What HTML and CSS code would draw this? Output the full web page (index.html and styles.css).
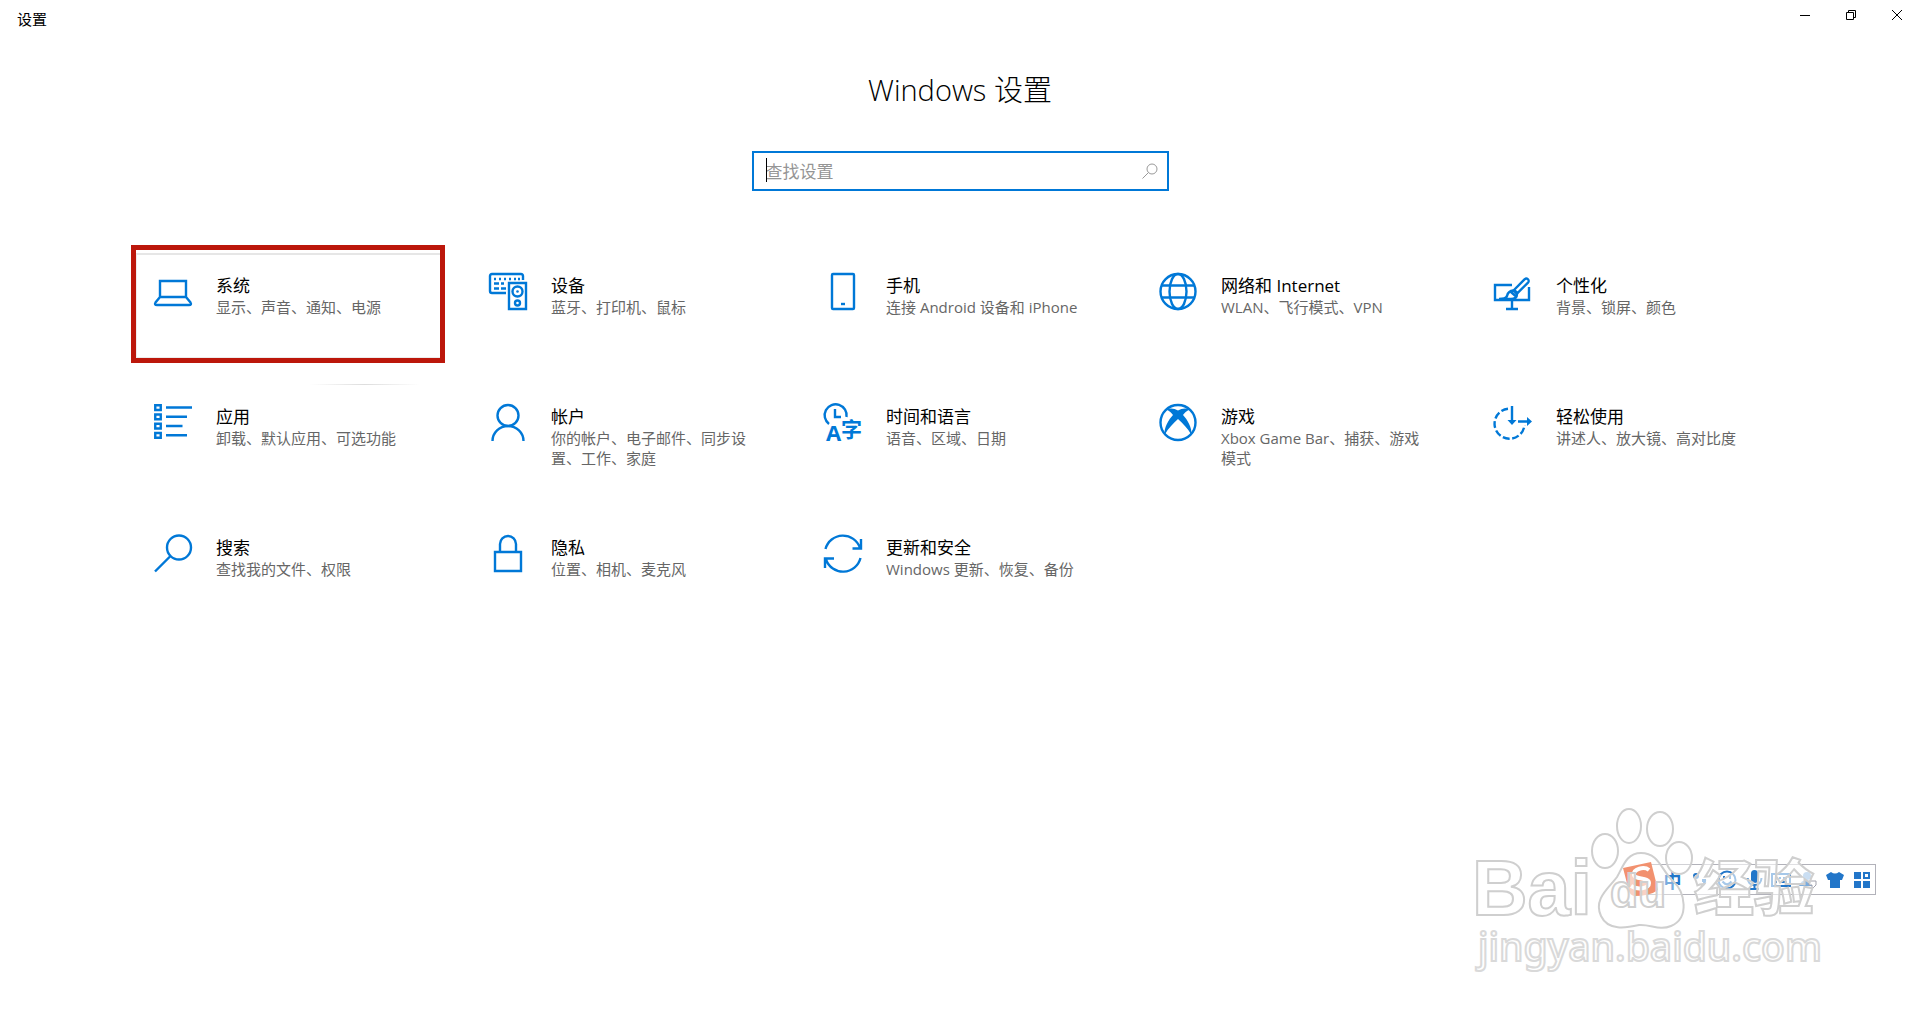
FILE: index.html
```html
<!DOCTYPE html>
<html lang="zh-CN">
<head>
<meta charset="utf-8">
<title>设置</title>
<link rel="stylesheet" href="styles.css">
</head>
<body>
<header class="titlebar">
  <span class="titlebar-name">设置</span>
  <div class="window-buttons">
    <button type="button" aria-label="最小化"><svg width="12" height="12" viewBox="0 0 12 12"><path d="M1 6.500H11"/></svg></button>
    <button type="button" aria-label="还原"><svg width="12" height="12" viewBox="0 0 12 12"><path d="M1.500 3.500H8.500V10.500H1.500ZM3.500 3.500V1.500H10.500V8.500H8.500"/></svg></button>
    <button type="button" aria-label="关闭"><svg width="12" height="12" viewBox="0 0 12 12"><path d="M1 1L11 11M11 1L1 11"/></svg></button>
  </div>
</header>

<main>
  <h1>Windows 设置</h1>
  <form class="search">
    <input type="text" placeholder="查找设置" aria-label="查找设置">
    <span class="caret"></span>
    <button type="button" aria-label="搜索"><svg width="16" height="16" viewBox="0 0 16 16"><circle cx="10" cy="6" r="5"/><path d="M6.500 9.500L.5 15.500"/></svg></button>
  </form>

  <nav class="tiles">
    <a href="#system" class="tile selected">
      <svg class="icon" viewBox="0 0 38 38"><path d="M6 8H32V24H6ZM6 24L1.500 29.500Q0 32 3 32H35Q38 32 36.500 29.500L32 24"/></svg>
      <span class="label"><strong>系统</strong><small>显示、声音、通知、电源</small></span>
    </a>
    <a href="#devices" class="tile">
      <svg class="icon" viewBox="0 0 38 38"><path d="M34 7V3Q34 1 32 1H3Q1 1 1 3V18Q1 20 3 20H17M20 10H37V36H20Z"/><circle cx="28.500" cy="18.500" r="5"/><circle cx="28.500" cy="30" r="2.500"/><circle class="solid" cx="28.500" cy="18.500" r="1.300"/><path d="M5 6H7M10 6H12M15 6H17M20 6H22M25 6H27M29 6H31M5 10.500H10M12 10.500H15M5 15.500H10M12 15.500H17"/></svg>
      <span class="label"><strong>设备</strong><small>蓝牙、打印机、鼠标</small></span>
    </a>
    <a href="#phone" class="tile">
      <svg class="icon" viewBox="0 0 38 38"><rect x="8" y="1" width="22" height="35" rx="1"/><path d="M17 31H21"/></svg>
      <span class="label"><strong>手机</strong><small>连接 Android 设备和 iPhone</small></span>
    </a>
    <a href="#network" class="tile">
      <svg class="icon" viewBox="0 0 38 38"><circle cx="19" cy="18.500" r="17.500"/><ellipse cx="19" cy="18.500" rx="8.500" ry="17.500"/><path d="M2 12.500H36M2 24.500H36"/></svg>
      <span class="label"><strong>网络和 Internet</strong><small>WLAN、飞行模式、VPN</small></span>
    </a>
    <a href="#personalization" class="tile">
      <svg class="icon" viewBox="0 0 38 38"><path d="M18 12H1V27H35V14M18 27V35M12 36H24"/><path d="M20 17L30.500 6.300A2.400 2.400 0 0 1 34 9.700L23.500 20Z"/><path d="M19.500 17.500L23 21Q23 26 17 26H5Q12 26 13 23Q14 18 19.500 17.500M17 19L21.500 23"/></svg>
      <span class="label"><strong>个性化</strong><small>背景、锁屏、颜色</small></span>
    </a>
    <a href="#apps" class="tile">
      <svg class="icon" viewBox="0 0 38 38"><path d="M1.250 1.250H6.750V6H1.250ZM1.250 10.500H6.750V15.250H1.250ZM1.250 19.750H6.750V24.500H1.250ZM1.250 29H6.750V33.750H1.250Z"/><path d="M12 3.500H38M12 12.750H33M12 22H28.500M12 31.250H33"/></svg>
      <span class="label"><strong>应用</strong><small>卸载、默认应用、可选功能</small></span>
    </a>
    <a href="#accounts" class="tile">
      <svg class="icon" viewBox="0 0 38 38"><circle cx="19" cy="11.500" r="10.500"/><path d="M3.500 37A15.500 15 0 0 1 34.500 37"/></svg>
      <span class="label"><strong>帐户</strong><small>你的帐户、电子邮件、同步设置、工作、家庭</small></span>
    </a>
    <a href="#time" class="tile">
      <svg class="icon" viewBox="0 0 38 38"><path d="M5 20A11 11 0 1 1 22.500 13M11 5V13H17"/><text x="2" y="37" class="letter">A</text><text x="17" y="33" class="hanzi">字</text></svg>
      <span class="label"><strong>时间和语言</strong><small>语音、区域、日期</small></span>
    </a>
    <a href="#gaming" class="tile">
      <svg class="icon" viewBox="0 0 38 38"><circle cx="19" cy="18.500" r="17.500"/><path class="solid" d="M7.500 5.500C11.500 3.500 15.500 4.500 19 6.500C22.500 4.500 26.500 3.500 30.500 5.500C27.500 7 25.500 9 24 11C28.500 16 33 23 32.500 31C28.500 24 23.500 19 19 15C14.500 19 9.500 24 5.500 31C5 23 9.500 16 14 11C12.500 9 10.500 7 7.500 5.500Z"/></svg>
      <span class="label"><strong>游戏</strong><small>Xbox Game Bar、捕获、游戏模式</small></span>
    </a>
    <a href="#ease" class="tile">
      <svg class="icon" viewBox="0 0 38 38"><path d="M14 4.800A15 15 0 1 0 30.500 21" stroke-dasharray="7 2.600"/><path d="M18 2V17M24 17.500H34"/><path class="solid" d="M13.500 16H22.500L18 21ZM33 13V22L38 17.500Z"/></svg>
      <span class="label"><strong>轻松使用</strong><small>讲述人、放大镜、高对比度</small></span>
    </a>
    <a href="#search" class="tile">
      <svg class="icon" viewBox="0 0 38 38"><circle cx="25" cy="12.500" r="12"/><path d="M16.500 21L1 36.500"/></svg>
      <span class="label"><strong>搜索</strong><small>查找我的文件、权限</small></span>
    </a>
    <a href="#privacy" class="tile">
      <svg class="icon" viewBox="0 0 38 38"><path d="M6 17H32V36H6ZM11 17V9A8 8 0 0 1 27 9V17"/></svg>
      <span class="label"><strong>隐私</strong><small>位置、相机、麦克风</small></span>
    </a>
    <a href="#update" class="tile">
      <svg class="icon" viewBox="0 0 38 38"><path d="M1.500 14A18 18 0 0 1 36 13M37 4V13.500H28.500M36.500 23A18 18 0 0 1 2 24.500M1 33V23.500H10"/></svg>
      <span class="label"><strong>更新和安全</strong><small>Windows 更新、恢复、备份</small></span>
    </a>
  </nav>
</main>

<div class="ime">
  <svg class="ime-logo" width="38" height="38" viewBox="0 0 38 38"><path d="M1 7L29 1L36 29Q28 35 12 35Q8 34 7 30Z" fill="#e9490f"/><path d="M27 9C22 5 11 8 12 14C13 19 27 16 27 22C27 28 15 29 9 25" fill="none" stroke="#fff" stroke-width="4"/></svg>
  <button type="button" class="ime-lang">中</button>
  <button type="button" aria-label="标点"><svg width="20" height="20" viewBox="0 0 20 20"><circle cx="6" cy="6" r="2" fill="none" stroke="#2276c9" stroke-width="2"/><path d="M12 9H16Q17 14 12 17V15Q14 14 13 12H12Z"/></svg></button>
  <button type="button" aria-label="表情"><svg width="20" height="20" viewBox="0 0 20 20"><circle cx="10" cy="10" r="8.500" fill="none" stroke="#2276c9" stroke-width="2"/><path d="M6 6H8V9H6ZM12 6H14V9H12Z"/><path d="M5.500 11.500Q10 17 14.500 11.500" fill="none" stroke="#2276c9" stroke-width="2"/></svg></button>
  <button type="button" aria-label="语音"><svg width="20" height="20" viewBox="0 0 20 20"><rect x="7" y="0" width="7" height="13" rx="3.500"/><path d="M3.500 8Q4 15 10.500 15Q17 15 17.500 8M10.500 15V19M6 19H15" fill="none" stroke="#2276c9" stroke-width="2"/></svg></button>
  <button type="button" aria-label="键盘"><svg width="20" height="20" viewBox="0 0 20 20"><rect x="1" y="4" width="18" height="12" fill="none" stroke="#2276c9" stroke-width="2"/><path d="M4 7H6V9H4ZM8 7H10V9H8ZM12 7H16V9H12ZM4 11H6V13H4ZM8 11H16V13H8Z"/></svg></button>
  <button type="button" aria-label="登录"><svg width="20" height="20" viewBox="0 0 20 20" opacity=".6"><circle cx="9" cy="6" r="4"/><path d="M1 16Q3 10 9 10Q15 10 17 16Z"/><path d="M11 11H18V15L14 19V15H11Z" fill="#fff" stroke="#667"/></svg></button>
  <button type="button" aria-label="皮肤"><svg width="20" height="20" viewBox="0 0 20 20"><path d="M6 2Q10 5 14 2L19 5L17 10H15V18H5V10H3L1 5Z"/></svg></button>
  <button type="button" aria-label="工具箱"><svg width="20" height="20" viewBox="0 0 20 20"><path d="M2 2H9V9H2ZM2 11H9V18H2ZM11 11H18V18H11Z"/><path d="M12 3H17V8H12Z" fill="none" stroke="#2276c9" stroke-width="2"/></svg></button>
</div>

<svg class="watermark" width="440" height="190" viewBox="0 0 440 190">
  <g class="paw">
    <ellipse cx="145" cy="61" rx="13" ry="17"/><ellipse cx="169" cy="36" rx="12" ry="17"/><ellipse cx="200" cy="39" rx="13" ry="17"/><ellipse cx="219" cy="68" rx="13" ry="16"/>
    <path d="M181 63C199 63 201 80 213 91C225 102 230 128 211 136C199 141 191 134 179 135C166 138 148 141 141 126C133 109 149 98 157 87C163 77 166 63 181 63Z"/>
  </g>
  <text class="brand" x="12" y="125">Bai</text>
  <text class="du" x="150" y="117">du</text>
  <text class="hanzi-brand" x="234" y="120">经验</text>
  <text class="site" x="18" y="171">jingyan.baidu.com</text>
</svg>
</body>
</html>
```
FILE: styles.css
```css
* { box-sizing: border-box; }

body {
  margin: 0;
  min-height: 100vh;
  position: relative;
  background: #fff;
  color: #000;
  font-family: "Open Sans", "Noto Sans CJK SC", sans-serif;
  font-size: 15px;
}

button {
  border: 0;
  padding: 0;
  background: none;
  display: flex;
  align-items: center;
  justify-content: center;
}

.titlebar {
  display: flex;
  justify-content: space-between;
  height: 40px;
  padding-left: 17px;
}
.titlebar-name { line-height: 38px; }
.window-buttons { display: flex; }
.window-buttons button { width: 46px; height: 30px; }
.window-buttons svg { fill: none; stroke: #000; }

h1 {
  margin: 30px 0 0;
  text-align: center;
  font-size: 29px;
  font-weight: 300;
  line-height: 40px;
}

.search {
  position: relative;
  display: flex;
  width: 417px;
  max-width: 90%;
  height: 40px;
  margin: 41px auto 54px;
  border: 2px solid #0078d7;
}
.search input {
  flex: 1;
  min-width: 0;
  border: 0;
  outline: 0;
  padding: 0 12px;
  font: inherit;
  font-size: 17px;
}
.search input::placeholder { color: #959595; opacity: 1; }
.search button { width: 34px; }
.search svg { fill: none; stroke: #999; }
.caret {
  position: absolute;
  left: 12px;
  top: 5px;
  width: 1px;
  height: 24px;
  background: #000;
}

.tiles {
  display: grid;
  grid-template-columns: repeat(5, 1fr);
  grid-auto-rows: minmax(118px, auto);
  gap: 13px 21px;
  padding: 0 135px 0 131px;
}
.tile {
  position: relative;
  display: flex;
  align-items: flex-start;
  gap: 24px;
  padding: 23px 18px 12px;
  border: 5px solid transparent;
  color: inherit;
  text-decoration: none;
}
.selected { border-color: #bc170b; }
.selected::before {
  content: "";
  position: absolute;
  inset: 3px 0 0;
  border: 1px solid #ececec;
  border-top: 2px solid #e6e6e6;
  border-right: 0;
}
.selected::after {
  content: "";
  position: absolute;
  left: 174px;
  top: 134px;
  width: 110px;
  height: 1px;
  background: linear-gradient(to right, transparent, #ddd, transparent);
}
.icon {
  flex: none;
  width: 38px;
  height: 38px;
  overflow: visible;
  fill: none;
  stroke: #0078d7;
  stroke-width: 2.4;
}
.icon .solid { fill: #0078d7; stroke: none; }
.icon text { fill: #0078d7; stroke: none; font-weight: 700; }
.icon .letter { font-size: 22px; }
.icon .hanzi { font-size: 21px; }
.label {
  max-width: 200px;
  padding-top: 1px;
}
.label strong {
  display: block;
  font-size: 17px;
  font-weight: 400;
  line-height: 23px;
}
.label small {
  display: block;
  color: #666;
  font-size: 15px;
  line-height: 20px;
}

.ime {
  position: absolute;
  right: 44px;
  bottom: 118px;
  display: flex;
  align-items: center;
  height: 31px;
  padding-left: 13px;
  border: 1px solid #b2b2ba;
  background: #fff;
}
.ime button { width: 27px; height: 27px; color: #2276c9; }
.ime button svg { fill: #2276c9; }
.ime .ime-lang { font: 700 18px/20px "Noto Sans CJK SC", sans-serif; }
.ime-logo { position: absolute; left: -24px; top: -4px; }

.watermark {
  position: absolute;
  right: 20px;
  bottom: 33px;
  pointer-events: none;
  fill: #fff;
  fill-opacity: .6;
  stroke: #cfcfcf;
  stroke-width: 2;
}
.paw { fill-opacity: .4; }
.brand { font: 700 77px "Liberation Sans", sans-serif; }
.du { font: 700 46px "Liberation Sans", sans-serif; }
.hanzi-brand { font: 900 60px "Noto Sans CJK SC", sans-serif; }
.site {
  font: 500 39px "Noto Sans", sans-serif;
  stroke: #d9d9d9;
}
```
